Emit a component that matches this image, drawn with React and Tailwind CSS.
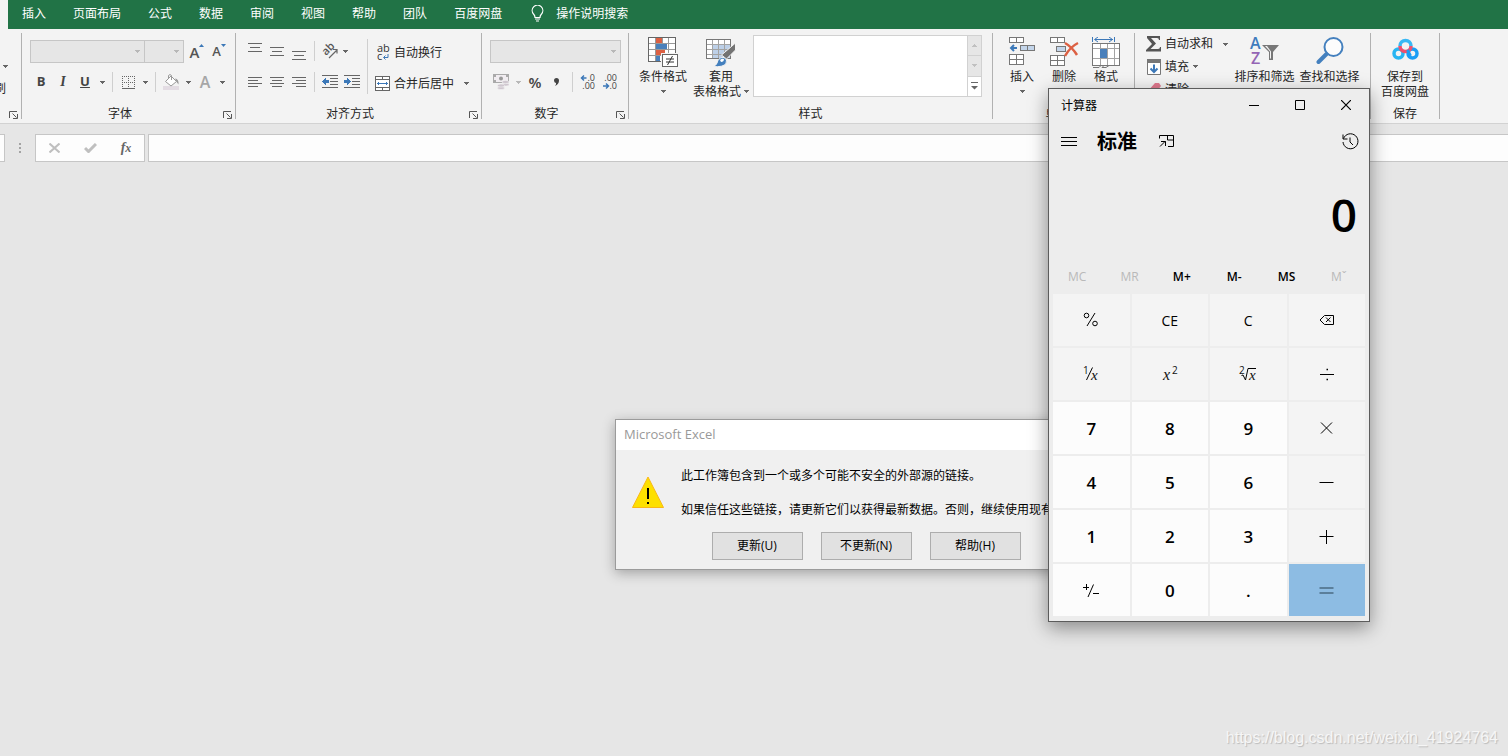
import React from "react";

const tabs = ["插入", "页面布局", "公式", "数据", "审阅", "视图", "帮助", "团队", "百度网盘"];

const memoryKeys = [
  { label: "MC", disabled: true },
  { label: "MR", disabled: true },
  { label: "M+" },
  { label: "M-" },
  { label: "MS" },
  { label: "Mˇ", disabled: true },
];

const Caret = ({ className = "text-[#666]" }) => (
  <svg width="5" height="3" viewBox="0 0 5 3" className={`shrink-0 ${className}`} shapeRendering="crispEdges">
    <path d="M0 0h5v1H0zM1 1h3v1H1zM2 2h1v1H2z" fill="currentColor" />
  </svg>
);

const Tool = ({ label, className = "w-[22px]", children }) => (
  <button aria-label={label} className={`flex h-[22px] shrink-0 items-center justify-center ${className}`}>
    {children}
  </button>
);

const MenuCaret = ({ label, className }) => (
  <Tool label={label} className="w-3">
    <Caret className={className} />
  </Tool>
);

const Sep = ({ className = "h-5" }) => <div className={`mx-1 w-px shrink-0 bg-[#cfcfcf] ${className}`} />;

const Combo = ({ label, className }) => (
  <div className={`relative h-[23px] ${className}`}>
    <select
      aria-label={label}
      disabled
      className="h-full w-full appearance-none border border-[#c6c6c6] bg-[#e6e6e6] opacity-100"
    />
    <Caret className="pointer-events-none absolute top-[10px] right-[5px] text-[#b8b8b8]" />
  </div>
);

const Group = ({ title, launcher, className = "", children }) => (
  <section className={`flex h-[86px] shrink-0 flex-col border-r border-[#b1b1b1] ${className}`}>
    <div className="flex h-[74px] items-start">{children}</div>
    <div className="flex h-3 items-center">
      <h2 className="flex-1 pt-[2px] text-center leading-3 whitespace-nowrap">{title}</h2>
      {launcher && (
        <button aria-label={`${title}设置`} className="flex h-3 w-[17px] items-end pl-[5px]">
          <svg width="9" height="8" viewBox="0 0 9 8" fill="none" stroke="#555" className="shrink-0">
            <path d="M.5 7V.5H8M3.500 2.500l4 4M8.500 3v4.500H4" />
          </svg>
        </button>
      )}
    </div>
  </section>
);

// big button: 32px icon with one or two lines under it
const BigButton = ({ icon, lines, className }) => (
  <button className={`flex flex-col items-center pt-1 leading-[15px] whitespace-nowrap ${className}`}>
    <span className="flex h-8 items-start justify-center">{icon}</span>
    {lines.map((line, i) => (
      <span key={i} className="flex h-[15px] items-center justify-center">
        {line}
      </span>
    ))}
  </button>
);

const Lines = ({ rows }) => (
  <svg width="14" height="18" viewBox="0 0 14 18" fill="#666" shapeRendering="crispEdges">
    {rows.map(([x, y, w]) => (
      <rect key={y} x={x} y={y} width={w} height="1" />
    ))}
  </svg>
);

const Indent = ({ right }) => (
  <svg width="16" height="14" viewBox="0 0 16 14" shapeRendering="crispEdges">
    <path d="M0 0h16v1H0zM8 3h8v1H8zM8 6h8v1H8zM8 9h8v1H8zM0 12h16v1H0z" fill="#666" />
    <g transform={right ? "matrix(-1 0 0 1 7 0)" : undefined} fill="#3c78b8">
      <path d="M0 6h1V5h1V4h1V3h1v2h3v3H4v2H3V9H2V8H1V7H0z" />
    </g>
  </svg>
);

const Decimal = ({ more }) => (
  <svg width="16" height="16" viewBox="0 0 16 16" className="overflow-visible" fontFamily="Open Sans, sans-serif" fontSize="9" fill="#444">
    <text x="15" y="7" textAnchor="end">{more ? ".0" : ".00"}</text>
    <text x="15" y="15" textAnchor="end">{more ? ".00" : ".0"}</text>
    {more ? (
      <path d="M6.500 4H1.500M4 1.500L1.500 4 4 6.500" fill="none" stroke="#3c78b8" strokeWidth="1.500" />
    ) : (
      <path d="M1 12h5.500M4 9.500L6.500 12 4 14.500" fill="none" stroke="#3c78b8" strokeWidth="1.500" />
    )}
  </svg>
);

const BordersIcon = () => (
  <svg width="13" height="13" viewBox="0 0 13 13" shapeRendering="crispEdges" fill="none" stroke="#666">
    <path d="M0 .5h13M0 6.500h13M.5 0v12M6.500 0v12M12.500 0v12" strokeDasharray="1 1" />
    <path d="M0 12.500h13" />
  </svg>
);

const BucketIcon = () => (
  <svg width="17" height="16" viewBox="0 0 17 16" fill="none">
    <path d="M0 12h16v4H0z" fill="#e3dce3" />
    <path d="M8 2l5.500 5.500L8 12 2.500 7.500z" fill="#fff" stroke="#999" />
    <path d="M5.500 5V1.500Q7 -.5 8.500 1.500V6" stroke="#999" />
    <path d="M12 4.500q4 .5 3.500 6l-1.500-2z" fill="#999" />
  </svg>
);

const MoneyIcon = () => (
  <svg width="17" height="16" viewBox="0 0 17 16" fill="none">
    <path d="M.5.5h15v8H.5z" fill="#f1edf1" stroke="#aaa" />
    <path d="M0 0h3v3H0zM13 0h3v3h-3zM0 6h3v3H0z" fill="#aaa" />
    <circle cx="8" cy="4.500" r="2" fill="#999" />
    <g fill="#cfc7cf" stroke="#f3f3f3" strokeWidth=".6">
      <ellipse cx="12.500" cy="10.500" rx="3.500" ry="1.600" />
      <ellipse cx="12.500" cy="8" rx="3.500" ry="1.600" />
      <ellipse cx="8" cy="14" rx="3.500" ry="1.600" />
      <ellipse cx="8" cy="11.500" rx="3.500" ry="1.600" />
    </g>
  </svg>
);

const OrientationIcon = () => (
  <svg width="17" height="16" viewBox="0 0 17 16" className="overflow-visible">
    <text x="0" y="0" transform="translate(5 13) rotate(-45)" fontSize="11" fontWeight="600" fontFamily="Open Sans, sans-serif" fill="#555">ab</text>
    <path d="M8 15l7.500-7.500M12 6.500h4v4" fill="none" stroke="#666" strokeWidth="1.200" />
  </svg>
);

const WrapIcon = () => (
  <svg width="14" height="16" viewBox="0 0 14 16" className="overflow-visible" fontFamily="Open Sans, sans-serif" fontSize="11" fill="#333">
    <text x="1" y="7">ab</text>
    <text x="1" y="15">c</text>
    <path d="M12 9v3.500H8M9.500 10.500l-2 2 2 2" fill="none" stroke="#3c78b8" />
  </svg>
);

const MergeIcon = () => (
  <svg width="15" height="15" viewBox="0 0 15 15" fill="none" shapeRendering="crispEdges">
    <path d="M.5.5h14v14H.5z" fill="#fff" stroke="#666" />
    <path d="M0 3.500h15M0 11.500h15M7.500 0v3M7.500 12v3" stroke="#666" />
    <path d="M2 7.500h11M3.500 6v3M11.500 6v3" stroke="#3c78b8" />
  </svg>
);

const ConditionalIcon = () => (
  <svg width="31" height="31" viewBox="0 0 31 31" shapeRendering="crispEdges">
    <path d="M.5.5h27v24H.5z" fill="#fff" />
    <path d="M7 1h7v5H7zM7 13h10v5H7z" fill="#dc6043" />
    <path d="M7 7h12v5H7zM7 19h5v5H7z" fill="#4a80bb" />
    <path d="M7.500 0v25M14.500 0v6M20.500 0v25M0 6.500h28M0 12.500h28M0 18.500h28" fill="none" stroke="#999" />
    <path d="M8 7h11v5H8z" fill="#4a80bb" />
    <path d="M.5.500h27v24H.5z" fill="none" stroke="#666" />
    <path d="M13 16h18v15H13z" fill="#f3f3f3" />
    <path d="M14.500 17.500h15v12h-15z" fill="#fff" stroke="#666" />
    <path d="M18 22h8M18 25h8M24.500 19l-5 9" fill="none" stroke="#333" shapeRendering="auto" />
  </svg>
);

const TableStyleIcon = () => (
  <svg width="30" height="31" viewBox="0 0 30 31">
    <g shapeRendering="crispEdges">
      <path d="M.5 2.500h24v19H.5z" fill="#fff" />
      <path d="M7 7h17v14H7z" fill="#bdd0e8" />
      <path d="M6.500 2v20M12.500 2v20M18.500 2v20M0 7.500h25M0 12.500h25M0 17.500h25" fill="none" stroke="#a3a3a3" />
      <path d="M.5 2.500h24v19H.5z" fill="none" stroke="#777" />
    </g>
    <path d="M29.500 6v7l-9 9-5-4z" fill="#737373" stroke="#f3f3f3" />
    <path d="M7 29.500q4-1 5-6 2-4 6-3 4 2 2 6-3 4-13 3z" fill="#4480be" stroke="#f3f3f3" />
    <path d="M14 23q2-2 4-1 0 3-3 3z" fill="#fff" />
  </svg>
);

const InsertIcon = () => (
  <svg width="27" height="29" viewBox="0 0 27 29" shapeRendering="crispEdges" fill="#fff" stroke="#777">
    <path d="M.5.5h14v5H.5zM7.500.5v5M.5 17.500h14v10H.5zM7.500 17.500v10M.5 22.500h14" />
    <path d="M11.500 8.500h14v5h-14zM18.500 8.500v5" fill="#c3d5ea" />
    <path d="M1.500 11H8M5 8l-3 3 3 3" fill="none" stroke="#3c78b8" strokeWidth="2" shapeRendering="auto" />
  </svg>
);

const DeleteIcon = () => (
  <svg width="30" height="29" viewBox="0 0 30 29" shapeRendering="crispEdges" fill="#fff" stroke="#777">
    <path d="M1.500.5h14v5h-14zM8.500.5v5M1.500 18.500h14v10h-14zM8.500 18.500v10M1.500 23.500h14" />
    <path d="M7.500 9.500h9v5h-9z" fill="#c3d5ea" />
    <path d="M16 6q7 4 12 12M29 6q-8 4-13 13" fill="none" stroke="#dc6043" strokeWidth="2.500" shapeRendering="auto" />
  </svg>
);

const FormatIcon = () => (
  <svg width="28" height="32" viewBox="0 0 28 32" shapeRendering="crispEdges" fill="none">
    <path d="M.5 0v5M22.500 0v5M3 2.500h18" stroke="#3c78b8" />
    <path d="M6 0L2.500 2.500 6 5M17 0l3.500 2.500L17 5" stroke="#3c78b8" shapeRendering="auto" />
    <path d="M.5 6.500h27v22H.5z" fill="#fff" />
    <path d="M8.500 6v23M15.500 6v23M22.500 6v23M0 11.500h28M0 21.500h28" stroke="#a3a3a3" />
    <path d="M.5 6.500h27v22H.5z" stroke="#777" />
    <path d="M8 12h7v9H8z" fill="#4a80bb" />
    <path d="M1 30.500h6l2-2h3l-2 2h4l3-2" stroke="#777" shapeRendering="auto" />
  </svg>
);

const SortFilterIcon = () => (
  <svg width="30" height="28" viewBox="0 0 30 28" className="overflow-visible" fontFamily="Open Sans, sans-serif" fontSize="16" fontWeight="600">
    <text x="0" y="12" fill="#3f7bbd">A</text>
    <text x="1" y="27" fill="#9465b5">Z</text>
    <path d="M12 8h17l-6 7v8h-4v-8z" fill="#777" />
    <path d="M15 9h2l4 5.500v7h-1v-7z" fill="#f3f3f3" />
  </svg>
);

const FindIcon = () => (
  <svg width="28" height="28" viewBox="0 0 28 28" fill="none" stroke="#4480be">
    <circle cx="17.500" cy="10" r="9" fill="#fcfcfc" strokeWidth="2" />
    <path d="M10.500 17L2.500 25" strokeWidth="4" strokeLinecap="round" />
  </svg>
);

const CloudDiskIcon = () => (
  <svg width="27" height="24" viewBox="0 0 27 24" fill="none" strokeWidth="3.500">
    <circle cx="6.500" cy="16.500" r="4.500" stroke="#27b5f2" />
    <circle cx="20.500" cy="16.500" r="4.500" stroke="#1a9ef5" />
    <path d="M8 9a5.500 5.500 0 0 1 11 0" stroke="#38b8f4" />
    <path d="M8 9a5.500 5.500 0 0 0 11 0" stroke="#f0506e" />
    <path d="M15.500 13l3 6" stroke="#1a9ef5" strokeWidth="3" />
  </svg>
);

const SumIcon = () => (
  <svg width="16" height="16" viewBox="0 0 16 16" fill="#555">
    <path d="M1 0h13v4h-1q0-2-2-2H5l5 5.500L4.500 13H12q2 0 2-2h1v4.500H0V14l6-6L1 2z" />
  </svg>
);

const FillIcon = () => (
  <svg width="14" height="16" viewBox="0 0 14 16" fill="none">
    <path d="M.5.5h13v15H.5z" fill="#fff" stroke="#777" />
    <path d="M0 0h14v4H0z" fill="#777" />
    <path d="M7 5.500v8M3.500 9.500L7 13l3.500-3.500" stroke="#3c78b8" strokeWidth="2" />
  </svg>
);

const EraserIcon = () => (
  <svg width="14" height="14" viewBox="0 0 14 14">
    <path d="M8 0h4l2 3-8 10-5-5z" fill="#e0798e" />
  </svg>
);

// calculator glyphs
const Glyph = ({ children }) => (
  <svg width="18" height="18" viewBox="0 0 18 18" fill="none" stroke="#000" strokeWidth="1" className="overflow-visible">
    {children}
  </svg>
);

const glyphs = {
  percent: (
    <Glyph>
      <circle cx="4.500" cy="4.500" r="2.300" />
      <circle cx="13" cy="12.500" r="2.300" />
      <path d="M13 2L5 15" />
    </Glyph>
  ),
  back: (
    <Glyph>
      <path d="M2 9l4.500-4.500h9v9h-9zM8 6.500l4.500 4.500M12.500 6.500L8 11" />
    </Glyph>
  ),
  inverse: (
    <Glyph>
      <g stroke="none" fill="#111">
        <text x="1" y="9" fontSize="10" fontFamily="Open Sans, sans-serif">1</text>
        <text x="9" y="15" fontSize="15" fontStyle="italic" fontFamily="Liberation Serif, serif">x</text>
      </g>
      <path d="M10.500 2.500L4.500 15" />
    </Glyph>
  ),
  square: (
    <Glyph>
      <g stroke="none" fill="#111">
        <text x="2" y="15" fontSize="16" fontStyle="italic" fontFamily="Liberation Serif, serif">x</text>
        <text x="11" y="9" fontSize="10" fontFamily="Open Sans, sans-serif">2</text>
      </g>
    </Glyph>
  ),
  root: (
    <Glyph>
      <g stroke="none" fill="#111">
        <text x="0" y="9" fontSize="10" fontFamily="Open Sans, sans-serif">2</text>
        <text x="10" y="15" fontSize="15" fontStyle="italic" fontFamily="Liberation Serif, serif">x</text>
      </g>
      <path d="M2.500 10.500l1.500-.5 2.500 5L9 3.500h8" />
    </Glyph>
  ),
  divide: (
    <Glyph>
      <path d="M2 9.500h14" />
      <path d="M8.500 4.500h1.500M8.500 14.500h1.500" strokeWidth="1.500" />
    </Glyph>
  ),
  times: (
    <Glyph>
      <path d="M3 3.500l11 11M14 3.500l-11 11" />
    </Glyph>
  ),
  minus: (
    <Glyph>
      <path d="M1.500 9.500h14" />
    </Glyph>
  ),
  plus: (
    <Glyph>
      <path d="M1.500 9.500h14M8.500 3v14" />
    </Glyph>
  ),
  sign: (
    <Glyph>
      <path d="M1 6.500h6M4.500 3v6M11.500 3.500L6 16M11 12.500h6" />
    </Glyph>
  ),
  equals: (
    <Glyph>
      <path d="M1.500 7h14M1.500 12h14" stroke="#2b4255" strokeWidth="1.200" />
    </Glyph>
  ),
};

const keys = [
  { name: "百分比", glyph: "percent", tone: "fn" },
  { name: "CE", tone: "fn" },
  { name: "C", tone: "fn" },
  { name: "退格", glyph: "back", tone: "fn" },
  { name: "倒数", glyph: "inverse", tone: "fn" },
  { name: "平方", glyph: "square", tone: "fn" },
  { name: "平方根", glyph: "root", tone: "fn" },
  { name: "除以", glyph: "divide", tone: "fn" },
  { name: "7" },
  { name: "8" },
  { name: "9" },
  { name: "乘以", glyph: "times", tone: "fn" },
  { name: "4" },
  { name: "5" },
  { name: "6" },
  { name: "减", glyph: "minus", tone: "fn" },
  { name: "1" },
  { name: "2" },
  { name: "3" },
  { name: "加", glyph: "plus", tone: "fn" },
  { name: "正负", glyph: "sign" },
  { name: "0" },
  { name: "." },
  { name: "等于", glyph: "equals", tone: "eq" },
];

const tones = {
  fn: "bg-[#f4f4f4] text-sm",
  num: "bg-[#fcfcfc] text-[17px] font-semibold",
  eq: "bg-[#8dbce3]",
};

const Ribbon = () => (
  <div className="flex h-[95px] overflow-hidden border-b border-[#d2d2d2] bg-[#f3f3f3] pt-1">
    <Group title="" launcher className="w-[22px]">
      <div className="flex w-2 flex-col items-end pt-8">
        <Caret />
        <span className="mt-[13px] flex w-[6px] justify-end self-start overflow-hidden leading-4 whitespace-nowrap">格式刷</span>
      </div>
    </Group>

    <Group title="字体" launcher className="w-[214px]">
      <div className="flex flex-col gap-2 pt-[7px] pl-2">
        <div className="flex items-center">
          <Combo label="字体名称" className="w-[115px]" />
          <Combo label="字号" className="-ml-px w-10" />
          <Tool label="增大字号" className="ml-[2px] w-[22px] text-[#555]">
            <span className="font-['Open_Sans'] text-[15px] font-semibold">A</span>
            <svg width="5" height="3" viewBox="0 0 5 3" className="mb-3"><path d="M0 3L2.500 0 5 3z" fill="#3c78b8" /></svg>
          </Tool>
          <Tool label="减小字号" className="w-[22px] text-[#555]">
            <span className="font-['Open_Sans'] text-[13px] font-semibold">A</span>
            <svg width="5" height="3" viewBox="0 0 5 3" className="mb-3"><path d="M0 0h5L2.500 3z" fill="#3c78b8" /></svg>
          </Tool>
        </div>
        <div className="flex items-center text-[#444]">
          <Tool label="加粗"><span className="font-['Open_Sans'] text-[13px] font-bold">B</span></Tool>
          <Tool label="倾斜"><span className="font-['Liberation_Serif'] text-sm font-bold italic">I</span></Tool>
          <Tool label="下划线"><span className="font-['Open_Sans'] text-[13px] font-bold underline">U</span></Tool>
          <MenuCaret label="下划线选项" />
          <Sep />
          <Tool label="边框"><BordersIcon /></Tool>
          <MenuCaret label="边框选项" />
          <Sep />
          <Tool label="填充颜色"><BucketIcon /></Tool>
          <MenuCaret label="填充颜色选项" />
          <Tool label="字体颜色"><span className="font-['Open_Sans'] text-base font-semibold text-[#a6a6a6]">A</span></Tool>
          <MenuCaret label="字体颜色选项" />
        </div>
      </div>
    </Group>

    <Group title="对齐方式" launcher className="w-[246px]">
      <div className="flex flex-col gap-[9px] pt-[7px] pl-2">
        <div className="flex items-center">
          <Tool label="顶端对齐"><Lines rows={[[0, 1, 14], [2, 5, 10], [0, 9, 14]]} /></Tool>
          <Tool label="垂直居中"><Lines rows={[[0, 5, 14], [2, 9, 10], [0, 13, 14]]} /></Tool>
          <Tool label="底端对齐"><Lines rows={[[0, 9, 14], [2, 13, 10], [0, 17, 14]]} /></Tool>
          <Sep />
          <Tool label="方向" className="w-5"><OrientationIcon /></Tool>
          <MenuCaret label="方向选项" />
        </div>
        <div className="flex items-center">
          <Tool label="左对齐"><Lines rows={[[0, 4, 14], [0, 7, 10], [0, 10, 14], [0, 13, 10]]} /></Tool>
          <Tool label="居中"><Lines rows={[[0, 4, 14], [2, 7, 10], [0, 10, 14], [2, 13, 10]]} /></Tool>
          <Tool label="右对齐"><Lines rows={[[0, 4, 14], [4, 7, 10], [0, 10, 14], [4, 13, 10]]} /></Tool>
          <Sep />
          <Tool label="减少缩进量"><Indent /></Tool>
          <Tool label="增加缩进量"><Indent right /></Tool>
        </div>
      </div>
      <Sep className="mt-[6px] h-[55px]" />
      <div className="flex flex-col gap-2 pt-2 pl-[3px]">
        <button className="flex h-[23px] items-center gap-[3px] whitespace-nowrap">
          <span className="flex w-4 justify-center"><WrapIcon /></span>自动换行
        </button>
        <div className="flex items-center">
          <button className="flex h-[23px] items-center gap-[3px] whitespace-nowrap">
            <span className="flex w-4"><MergeIcon /></span>合并后居中
          </button>
          <Tool label="合并选项" className="w-6"><Caret /></Tool>
        </div>
      </div>
    </Group>

    <Group title="数字" launcher className="w-[147px]">
      <div className="flex flex-col gap-2 pt-[7px] pl-2">
        <Combo label="数字格式" className="w-[131px]" />
        <div className="flex items-center text-[#444]">
          <Tool label="会计数字格式"><MoneyIcon /></Tool>
          <MenuCaret label="会计格式选项" className="text-[#b8b8b8]" />
          <Tool label="百分比样式"><span className="font-['Open_Sans'] text-[15px] font-semibold">%</span></Tool>
          <Tool label="千位分隔样式">
            <svg width="6" height="8" viewBox="0 0 6 8"><path d="M0 2.500a2.500 2.500 0 0 1 5 0Q5 6 1 8q1.500-2 1-3-2-.5-2-2.500z" fill="#444" /></svg>
          </Tool>
          <Sep />
          <Tool label="增加小数位数"><Decimal more /></Tool>
          <Tool label="减少小数位数"><Decimal /></Tool>
        </div>
      </div>
    </Group>

    <Group title="样式" className="w-[364px]">
      <div className="flex pl-2">
        <BigButton className="w-[52px]" icon={<ConditionalIcon />} lines={["条件格式", <Caret />]} />
        <BigButton
          className="w-16"
          icon={<TableStyleIcon />}
          lines={["套用", <span className="flex items-center gap-[3px]">表格格式<Caret /></span>]}
        />
      </div>
      <div className="mt-[2px] flex h-[62px] w-[229px] border border-[#d1d1d1] bg-white">
        <div className="flex-1" />
        <div className="flex w-[14px] flex-col divide-y divide-[#d1d1d1] border-l border-[#d1d1d1] text-[#c0c0c0]">
          <button aria-label="上一行" className="flex flex-1 items-center justify-center bg-[#e6e6e6]"><Caret className="rotate-180" /></button>
          <button aria-label="下一行" className="flex flex-1 items-center justify-center bg-[#e6e6e6]"><Caret className="" /></button>
          <button aria-label="其他" className="flex flex-1 items-center justify-center">
            <svg width="7" height="8" viewBox="0 0 7 8" fill="#666"><path d="M0 0h7v1H0zM0 4h7L3.500 7.500z" /></svg>
          </button>
        </div>
      </div>
    </Group>

    <Group title="单元格" className="w-[142px]">
      <div className="flex pl-2">
        <BigButton className="w-[42px]" icon={<InsertIcon />} lines={["插入", <Caret />]} />
        <BigButton className="w-[42px]" icon={<DeleteIcon />} lines={["删除", <Caret />]} />
        <BigButton className="w-[42px]" icon={<FormatIcon />} lines={["格式", <Caret />]} />
      </div>
    </Group>

    <Group title="编辑" className="w-[236px]">
      <div className="flex w-[97px] flex-col pl-2">
        <button className="flex h-[22px] items-center whitespace-nowrap">
          <span className="flex w-[22px] justify-center"><SumIcon /></span>自动求和<span className="w-[10px]" /><Caret />
        </button>
        <button className="flex h-[23px] items-center whitespace-nowrap">
          <span className="flex w-[22px] justify-center"><FillIcon /></span>填充<span className="w-1" /><Caret />
        </button>
        <button className="flex h-[23px] items-center whitespace-nowrap">
          <span className="flex w-[22px] justify-center"><EraserIcon /></span>清除<span className="w-1" /><Caret />
        </button>
      </div>
      <BigButton className="w-[65px]" icon={<SortFilterIcon />} lines={["排序和筛选"]} />
      <BigButton className="w-[65px]" icon={<FindIcon />} lines={["查找和选择"]} />
    </Group>

    <Group title="保存" className="w-[69px]">
      <BigButton className="w-full" icon={<CloudDiskIcon />} lines={["保存到", "百度网盘"]} />
    </Group>
  </div>
);

const FormulaBar = () => (
  <div className="mt-[10px] flex h-7 items-stretch">
    <div className="w-[5px] border border-l-0 border-[#c6c6c6] bg-[#fdfdfd]" />
    <div className="flex w-[30px] items-center justify-center">
      <svg width="2" height="10" viewBox="0 0 2 10" fill="#a3a3a3"><path d="M0 0h2v2H0zM0 4h2v2H0zM0 8h2v2H0z" /></svg>
    </div>
    <div className="flex w-[110px] border border-[#c6c6c6] bg-[#fdfdfd]">
      <button aria-label="取消" className="flex flex-1 items-center justify-center">
        <svg width="11" height="10" viewBox="0 0 11 10" fill="none" stroke="#bfbfbf" strokeWidth="2"><path d="M.5.5l10 9M10.500.5l-10 9" /></svg>
      </button>
      <button aria-label="输入" className="flex flex-1 items-center justify-center">
        <svg width="13" height="10" viewBox="0 0 13 10" fill="none" stroke="#bfbfbf" strokeWidth="3"><path d="M1 5l3.500 3.500L12 1" /></svg>
      </button>
      <button aria-label="插入函数" className="flex-1 font-['Liberation_Serif'] text-sm leading-4 font-bold text-[#666] italic">
        f<span className="text-xs">x</span>
      </button>
    </div>
    <input aria-label="编辑栏" className="ml-[3px] min-w-0 flex-1 border border-r-0 border-[#c6c6c6] bg-[#fdfdfd] px-2 outline-none" />
  </div>
);

const Dialog = () => (
  <div
    role="dialog"
    aria-label="Microsoft Excel"
    className="absolute top-[419px] left-[615px] w-[502px] border border-[#9b9b9b] bg-[#f0f0f0] text-black shadow-[0_3px_12px_rgba(0,0,0,0.3)]"
  >
    <div className="flex h-[30px] items-center bg-white px-2 text-[13px] text-[#999]">Microsoft Excel</div>
    <div className="flex gap-[17px] overflow-hidden pt-[17px] pl-4">
      <svg width="32" height="32" viewBox="0 0 32 32" className="mt-[9px] shrink-0">
        <path d="M16 1l15.500 30.500H.5z" fill="#fde000" stroke="#f9b716" />
        <path d="M15 12h2v11h-2zM15 26h2v2h-2z" fill="#000" />
      </svg>
      <div className="flex flex-col gap-[17px] leading-[17px] whitespace-nowrap">
        <p>此工作簿包含到一个或多个可能不安全的外部源的链接。</p>
        <p>如果信任这些链接，请更新它们以获得最新数据。否则，继续使用现有数据。</p>
      </div>
    </div>
    <div className="flex justify-center gap-[18px] pt-[14px] pb-[9px]">
      {["更新(U)", "不更新(N)", "帮助(H)"].map((label) => (
        <button key={label} className="h-7 w-[91px] border border-[#adadad] bg-[#e1e1e1]">
          {label}
        </button>
      ))}
    </div>
  </div>
);

const Calculator = () => (
  <div className="absolute top-[88px] left-[1048px] w-[322px] border border-[#5c5c5c] bg-[#ededed] text-black shadow-[0_6px_18px_rgba(0,0,0,0.4)]">
    <div className="flex h-8 items-center">
      <span className="flex-1 pt-px pl-3">计算器</span>
      <button aria-label="最小化" className="flex h-8 w-[46px] items-center justify-center">
        <svg width="10" height="11" viewBox="0 0 10 11" shapeRendering="crispEdges"><path d="M0 5h10v1H0z" /></svg>
      </button>
      <button aria-label="最大化" className="flex h-8 w-[46px] items-center justify-center">
        <svg width="10" height="10" viewBox="0 0 10 10" fill="none" stroke="#000"><path d="M.5.5h9v9h-9z" /></svg>
      </button>
      <button aria-label="关闭" className="flex h-8 w-[46px] items-center justify-center">
        <svg width="10" height="10" viewBox="0 0 10 10" fill="none" stroke="#000" strokeWidth="1.200"><path d="M0 0l10 10M10 0L0 10" /></svg>
      </button>
    </div>
    <div className="flex h-10 items-center px-3">
      <button aria-label="打开导航">
        <svg width="16" height="9" viewBox="0 0 16 9" shapeRendering="crispEdges"><path d="M0 0h16v1H0zM0 4h16v1H0zM0 8h16v1H0z" /></svg>
      </button>
      <h1 className="pt-px pl-5 text-xl font-bold">标准</h1>
      <button aria-label="置顶" className="ml-[22px]">
        <svg width="15" height="14" viewBox="0 0 15 14" fill="none" stroke="#000">
          <path d="M.5 4.500V1.500h14v11H9M8.500 2v4h6M1 12.500l5.500-5.500M2 7.500h4.500V12" />
        </svg>
      </button>
      <button aria-label="历史记录" className="-mr-[2px] ml-auto">
        <svg width="17" height="17" viewBox="0 0 17 17" fill="none" stroke="#000">
          <path d="M1.500 5.500A7.500 7.500 0 1 1 1 9M1 1.500v4.500h4.500M8 4.500V9l3 3" />
        </svg>
      </button>
    </div>
    <div className="flex h-[100px] items-center justify-end px-3 pt-2 text-[46px] font-semibold">0</div>
    <div className="grid h-[33px] grid-cols-6 pr-1 pb-[2px] pl-[2px] text-xs font-semibold">
      {memoryKeys.map(({ label, disabled }) => (
        <button key={label} disabled={disabled} className="disabled:font-normal disabled:text-[#b9b9b9]">
          {label}
        </button>
      ))}
    </div>
    <div className="grid grid-cols-4 gap-[2px] px-1 pb-[5px]">
      {keys.map(({ name, glyph, tone = "num" }) => (
        <button key={name} aria-label={name} className={`flex h-[52px] items-center justify-center ${tones[tone]}`}>
          {glyph ? glyphs[glyph] : <span className="pt-[2px]">{name}</span>}
        </button>
      ))}
    </div>
  </div>
);

const App = () => {
  return (
    <div
      lang="zh-CN"
      className="relative min-h-screen overflow-hidden bg-[#e6e6e6] font-['Open_Sans','Noto_Sans_CJK_SC',sans-serif] text-xs text-[#262626]"
    >
      <header className="bg-[#f3f3f3] pl-2">
        <nav className="flex h-[29px] items-center gap-[27px] bg-[#217346] pb-[2px] pl-[14px] whitespace-nowrap text-white">
          {tabs.map((tab) => (
            <button key={tab}>{tab}</button>
          ))}
          <button className="ml-[2px] flex items-center gap-3">
            <svg width="13" height="17" viewBox="0 0 13 17" fill="none" stroke="#fff" strokeWidth="1.200">
              <path d="M4 12.500q0-2-1.500-3.500a5.300 5.300 0 1 1 8 0Q9 10.500 9 12.500zM4 14h5M5 16h3" />
            </svg>
            操作说明搜索
          </button>
        </nav>
      </header>
      <Ribbon />
      <FormulaBar />
      <Dialog />
      <Calculator />
      <a
        href="https://blog.csdn.net/weixin_41924764"
        className="absolute right-[10px] bottom-[6px] font-['Liberation_Sans'] text-base text-[#f6f6f6] [text-shadow:1px_1px_1px_#bbb]"
      >
        https://blog.csdn.net/weixin_41924764
      </a>
    </div>
  );
};

export default App;
